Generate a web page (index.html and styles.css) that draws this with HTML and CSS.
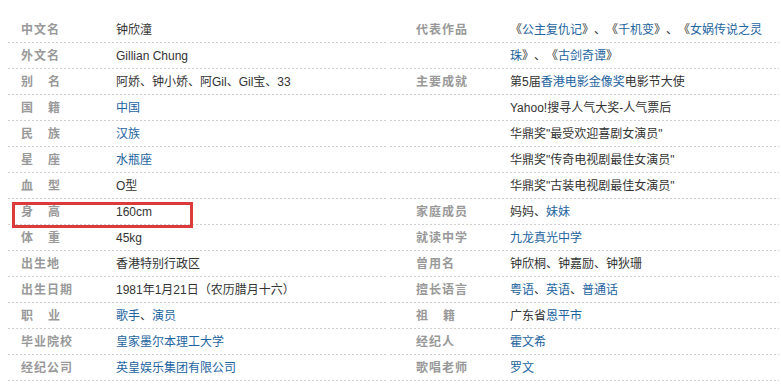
FILE: index.html
```html
<!DOCTYPE html>
<html lang="zh-CN">
<head>
<meta charset="utf-8">
<title>钟欣潼 基本信息</title>
<link rel="stylesheet" href="styles.css">
</head>
<body>
<div class="basic-info">
  <dl class="col col-left">
    <div class="item"><dt class="name">中文名</dt><dd class="value">钟欣潼</dd></div>
    <div class="item"><dt class="name">外文名</dt><dd class="value">Gillian Chung</dd></div>
    <div class="item"><dt class="name two">别名</dt><dd class="value">阿娇、钟小娇、阿Gil、Gil宝、33</dd></div>
    <div class="item"><dt class="name two">国籍</dt><dd class="value"><a href="#">中国</a></dd></div>
    <div class="item"><dt class="name two">民族</dt><dd class="value"><a href="#">汉族</a></dd></div>
    <div class="item"><dt class="name two">星座</dt><dd class="value"><a href="#">水瓶座</a></dd></div>
    <div class="item"><dt class="name two">血型</dt><dd class="value">O型</dd></div>
    <div class="item marked"><dt class="name two">身高</dt><dd class="value">160cm</dd><span class="highlight"></span></div>
    <div class="item"><dt class="name two">体重</dt><dd class="value">45kg</dd></div>
    <div class="item"><dt class="name">出生地</dt><dd class="value">香港特别行政区</dd></div>
    <div class="item"><dt class="name">出生日期</dt><dd class="value">1981年1月21日（农历腊月十六）</dd></div>
    <div class="item"><dt class="name two">职业</dt><dd class="value"><a href="#">歌手</a>、<a href="#">演员</a></dd></div>
    <div class="item"><dt class="name">毕业院校</dt><dd class="value"><a href="#">皇家墨尔本理工大学</a></dd></div>
    <div class="item"><dt class="name">经纪公司</dt><dd class="value"><a href="#">英皇娱乐集团有限公司</a></dd></div>
  </dl>
  <dl class="col col-right">
    <div class="item"><dt class="name">代表作品</dt><dd class="value">《<a href="#">公主复仇记</a>》、《<a href="#">千机变</a>》、《<a href="#">女娲传说之灵珠</a>》、《<a href="#">古剑奇谭</a>》</dd></div>
    <div class="item"><dt class="name">主要成就</dt><dd class="value">第5届<a href="#">香港电影金像奖</a>电影节大使<br>Yahoo!搜寻人气大奖-人气票后<br>华鼎奖"最受欢迎喜剧女演员"<br>华鼎奖"传奇电视剧最佳女演员"<br>华鼎奖"古装电视剧最佳女演员"</dd></div>
    <div class="item"><dt class="name">家庭成员</dt><dd class="value">妈妈、<a href="#">妹妹</a></dd></div>
    <div class="item"><dt class="name">就读中学</dt><dd class="value"><a href="#">九龙真光中学</a></dd></div>
    <div class="item"><dt class="name">曾用名</dt><dd class="value">钟欣桐、钟嘉励、钟狄珊</dd></div>
    <div class="item"><dt class="name">擅长语言</dt><dd class="value"><a href="#">粤语</a>、<a href="#">英语</a>、<a href="#">普通话</a></dd></div>
    <div class="item"><dt class="name two">祖籍</dt><dd class="value">广东省<a href="#">恩平市</a></dd></div>
    <div class="item"><dt class="name">经纪人</dt><dd class="value"><a href="#">霍文希</a></dd></div>
    <div class="item"><dt class="name">歌唱老师</dt><dd class="value"><a href="#">罗文</a></dd></div>
  </dl>
</div>
</body>
</html>
```
FILE: styles.css
```css
html, body {
  margin: 0;
  padding: 0;
  background: #fff;
}

body {
  font-family: "Liberation Sans", "Noto Sans CJK SC", sans-serif;
  font-size: 12px;
  color: #333;
  text-spacing-trim: space-all;
}

.basic-info {
  display: flex;
  padding-top: 17px;
}

.col {
  margin: 0;
  padding: 0;
  background-image:
    linear-gradient(to bottom, #fff 25px, transparent 25px),
    linear-gradient(to right, #cfcfcf 2px, transparent 2px);
  background-size: 100% 26px, 4px 26px;
  background-repeat: repeat, repeat;
}

.col-left {
  margin-left: 8px;
  width: 378px;
}

.col-right {
  margin-left: 4px;
  width: 389px;
}

.item {
  position: relative;
  display: flex;
  line-height: 26px;
}

.name {
  flex: none;
  font-weight: bold;
  color: #999;
  letter-spacing: 1px;
  white-space: nowrap;
}

.col-left .name {
  width: 95px;
  padding-left: 13px;
}

.col-right .name {
  width: 94px;
  padding-left: 26px;
}

.name.two {
  letter-spacing: 15px;
}

.value {
  margin: 0;
  flex: 1;
  min-width: 0;
}

.col-right .value {
  flex: none;
  width: 258px;
}

.value a {
  color: #1d64a0;
  text-decoration: none;
}

.highlight {
  position: absolute;
  left: 4px;
  top: 3px;
  width: 181px;
  height: 26px;
  box-sizing: border-box;
  border: 3px solid #dc3b3b;
  pointer-events: none;
}
```
